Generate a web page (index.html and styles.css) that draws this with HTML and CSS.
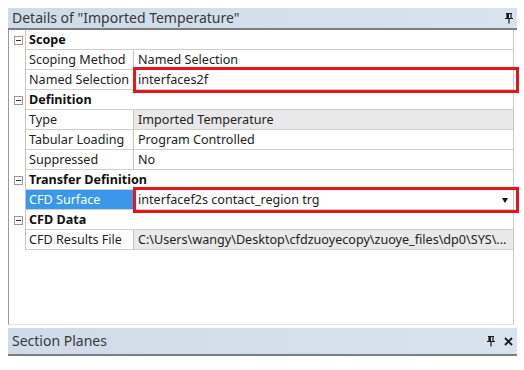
FILE: index.html
```html
<!DOCTYPE html>
<html>
<head>
<meta charset="utf-8">
<link rel="stylesheet" href="styles.css">
</head>
<body>
<div class="panel">
  <div class="titlebar">
    <span class="title">Details of "Imported Temperature"</span>
    <svg class="pin" width="8" height="11" viewBox="0 0 8 11"><path d="M1 0.5h6M2 0.5v5M6 0.5v5M0 5.5h8M4 5.5v5" stroke="#1a1a1a" stroke-width="1.2" fill="none"/><rect x="2" y="1" width="2" height="4" fill="#1a1a1a"/></svg>
  </div>
  <div class="grid">
    <div class="row cat"><div class="tree"><span class="minus"></span></div><div class="cathead">Scope</div></div>
    <div class="row"><div class="tree"></div><div class="label">Scoping Method</div><div class="value">Named Selection</div></div>
    <div class="row"><div class="tree"></div><div class="label">Named Selection</div><div class="value marked">interfaces2f</div></div>
    <div class="row cat"><div class="tree"><span class="minus"></span></div><div class="cathead">Definition</div></div>
    <div class="row"><div class="tree"></div><div class="label">Type</div><div class="value ro">Imported Temperature</div></div>
    <div class="row"><div class="tree"></div><div class="label">Tabular Loading</div><div class="value">Program Controlled</div></div>
    <div class="row"><div class="tree"></div><div class="label">Suppressed</div><div class="value">No</div></div>
    <div class="row cat"><div class="tree"><span class="minus"></span></div><div class="cathead">Transfer Definition</div></div>
    <div class="row"><div class="tree"></div><div class="label sel">CFD Surface</div><div class="value marked drop">interfacef2s contact_region trg<span class="arrow"></span></div></div>
    <div class="row cat"><div class="tree"><span class="minus"></span></div><div class="cathead">CFD Data</div></div>
    <div class="row"><div class="tree"></div><div class="label">CFD Results File</div><div class="value ro">C:\Users\wangy\Desktop\cfdzuoyecopy\zuoye_files\dp0\SYS\...</div></div>
    <div class="empty"></div>
  </div>
  <div class="titlebar second">
    <span class="title">Section Planes</span>
    <span class="icons">
      <svg class="pin" width="8" height="11" viewBox="0 0 8 11"><path d="M1 0.5h6M2 0.5v5M6 0.5v5M0 5.5h8M4 5.5v5" stroke="#1a1a1a" stroke-width="1.2" fill="none"/><rect x="2" y="1" width="2" height="4" fill="#1a1a1a"/></svg>
      <svg class="close" width="9" height="9" viewBox="0 0 9 9"><path d="M1 1L8 8M8 1L1 8" stroke="#1a1a1a" stroke-width="1.8"/></svg>
    </span>
  </div>
</div>
</body>
</html>
```
FILE: styles.css
```css
html, body { margin: 0; padding: 0; background: #fff; }
body { font-family: "Noto Sans", "Open Sans", sans-serif; color: #222; }
.panel { margin: 8px 0 0 8px; width: 509px; }
.titlebar {
  height: 20px;
  background: linear-gradient(90deg, #cfdbe8, #d8e3ee);
  border-bottom: 2px solid #7e7e7e;
  display: flex; align-items: center; justify-content: space-between;
  padding: 0 4px 0 4px;
}
.title { font-size: 14px; color: #383838; line-height: 20px; }
.pin { display: block; }
.grid {
  width: 504px;
  border-left: 1px solid #9a9a9a;
  border-right: 1px solid #c8c8c8;
  border-bottom: 1px solid #e4e4e4;
}
.row { display: flex; height: 20px; font-size: 12.6px; line-height: 19px; }
.tree { width: 16px; flex: none; display: flex; align-items: center; justify-content: center; position: relative; }
.minus { width: 7px; height: 7px; border: 1px solid #9a9a9a; position: relative; background: #fff; margin-left: 2px; }
.minus::after { content: ""; position: absolute; left: 1px; top: 3px; width: 5px; height: 1px; background: #333; }
.label, .value, .cathead { border-bottom: 1px solid #cfcfcf; border-left: 1px solid #c4c4c4; padding-left: 3px; white-space: nowrap; overflow: hidden; }
.cathead { flex: 1; font-weight: bold; color: #111; }
.label { width: 104px; flex: none; }
.value { flex: 1; padding-left: 4px; position: relative; overflow: visible; }
.ro { background: #e9e9e9; overflow: hidden; }
.sel { background: #3b97ea; color: #fff; }
.marked::after {
  content: ""; position: absolute; left: -1px; right: -6px; top: -3px; bottom: -4px;
  border: 3px solid #e8141c;
}
.arrow {
  position: absolute; right: 5px; top: 8px;
  border-left: 3.5px solid transparent; border-right: 3.5px solid transparent; border-top: 5px solid #111;
}
.empty { height: 74px; }
.second { margin-top: 3px; height: 26px; }
.icons { display: flex; align-items: center; gap: 9px; }
```
